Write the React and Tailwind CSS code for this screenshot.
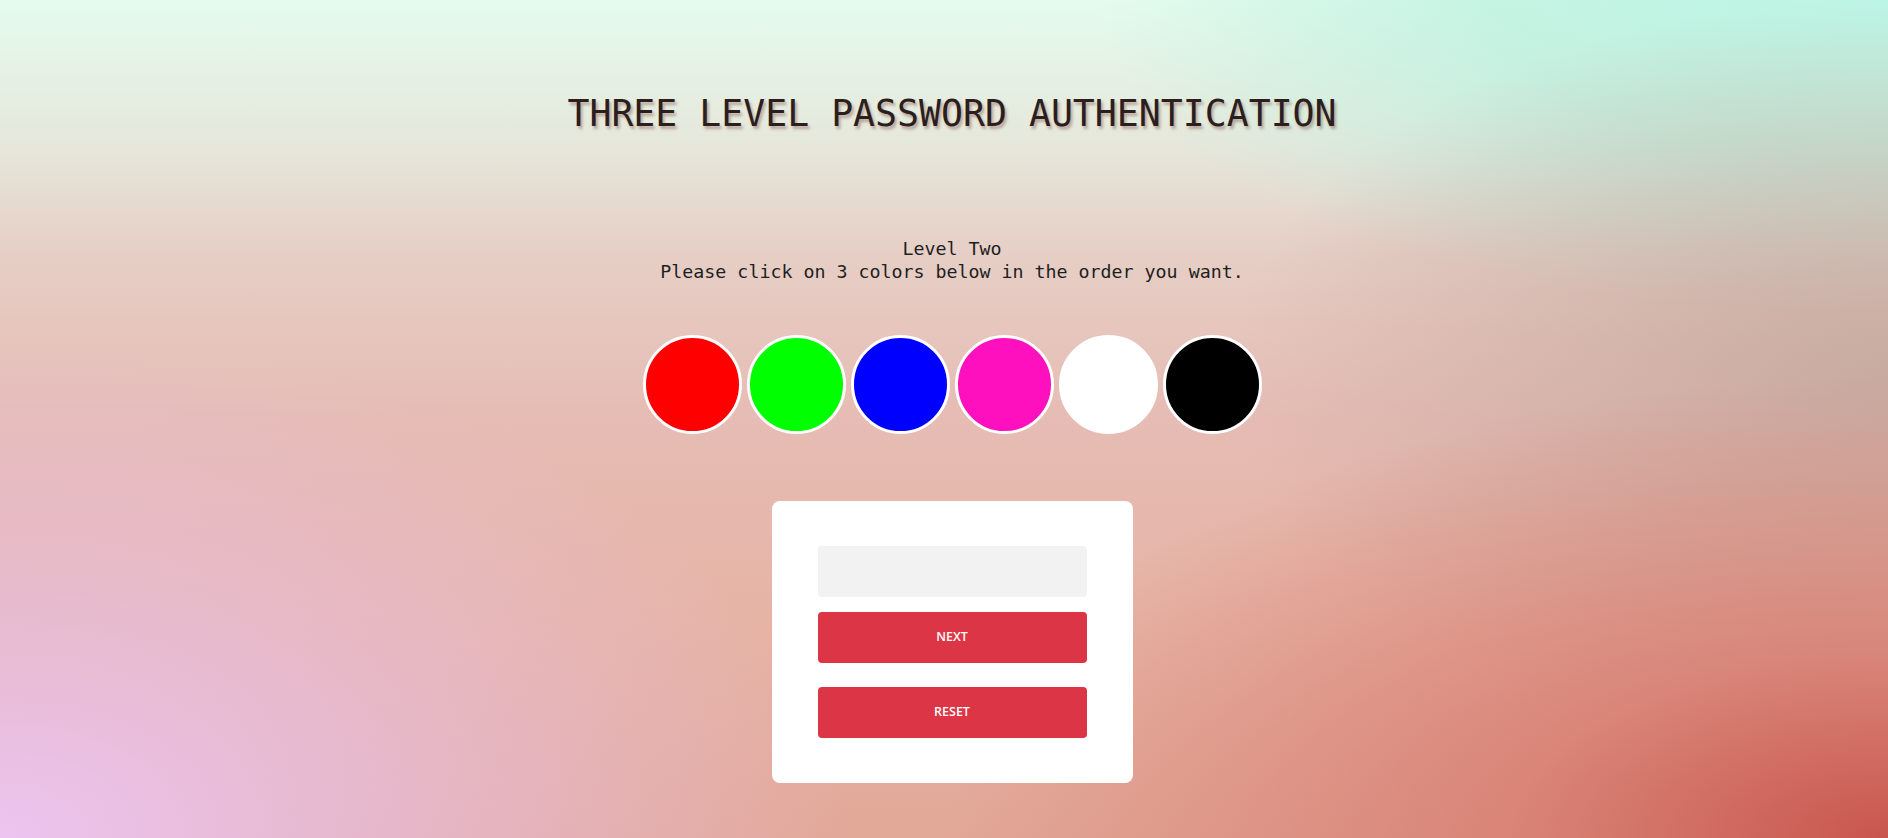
import React, { useState } from "react";

const COLORS = [
    { name: "red", cls: "bg-[#ff0000]" },
    { name: "green", cls: "bg-[#00ff00]" },
    { name: "blue", cls: "bg-[#0000ff]" },
    { name: "pink", cls: "bg-[#ff10bf]" },
    { name: "white", cls: "bg-white" },
    { name: "black", cls: "bg-black" },
];

const App = () => {
    const [picked, setPicked] = useState([]);

    const pick = (name) => {
        if (picked.length < 3) setPicked([...picked, name]);
    };

    return (
        <div className="min-h-screen w-full font-['DejaVu_Sans_Mono',monospace] bg-[radial-gradient(ellipse_50%_55%_at_100%_100%,#c9564e_0%,rgba(214,120,108,0.75)_40%,rgba(214,120,108,0)_100%),radial-gradient(ellipse_45%_60%_at_0%_100%,#ecc4f0_0%,rgba(232,190,224,0.7)_45%,rgba(232,190,224,0)_100%),radial-gradient(ellipse_35%_45%_at_100%_45%,rgba(196,168,158,0.9)_0%,rgba(196,168,158,0)_100%),radial-gradient(ellipse_42%_38%_at_100%_0%,#bcf5e5_0%,rgba(184,240,222,0.7)_50%,rgba(188,245,229,0)_100%),linear-gradient(180deg,#e4fcee_0%,#e6e6da_18%,#e6cfc6_30%,#e6bcb4_50%,#e6b3a4_75%,#e2a898_100%)]">
            <div className="flex flex-col items-center pl-4">
                <h1 className="mt-[92px] text-[36.5px] leading-[44px] text-[#2a1e1e] [text-shadow:2px_3px_3px_rgba(130,70,60,0.45)]">
                    THREE LEVEL PASSWORD AUTHENTICATION
                </h1>

                <div className="mt-[101px] text-center text-[18.3px] leading-[23px] text-[#1e1e1e]">
                    <p>Level Two</p>
                    <p>Please click on 3 colors below in the order you want.</p>
                </div>

                <div className="mt-[52px] flex gap-[5px]">
                    {COLORS.map((c) => (
                        <button
                            key={c.name}
                            onClick={() => pick(c.name)}
                            className={`w-[99px] h-[99px] rounded-full border-[3px] border-white ${c.cls}`}
                        />
                    ))}
                </div>

                <div className="mt-[67px] w-[361px] bg-white rounded-lg px-[46px] pt-[45px] pb-[45px] flex flex-col font-['Open_Sans',sans-serif]">
                    <input
                        type="password"
                        readOnly
                        value={picked.join("")}
                        className="h-[51px] w-full bg-[#f2f2f2] rounded outline-none px-3"
                    />
                    <button className="mt-[15px] h-[51px] w-full rounded bg-[#dc3545] text-white text-[12.5px] font-semibold">
                        NEXT
                    </button>
                    <button
                        onClick={() => setPicked([])}
                        className="mt-[24px] h-[51px] w-full rounded bg-[#dc3545] text-white text-[12.5px] font-semibold"
                    >
                        RESET
                    </button>
                </div>
            </div>
        </div>
    );
};

export default App;
